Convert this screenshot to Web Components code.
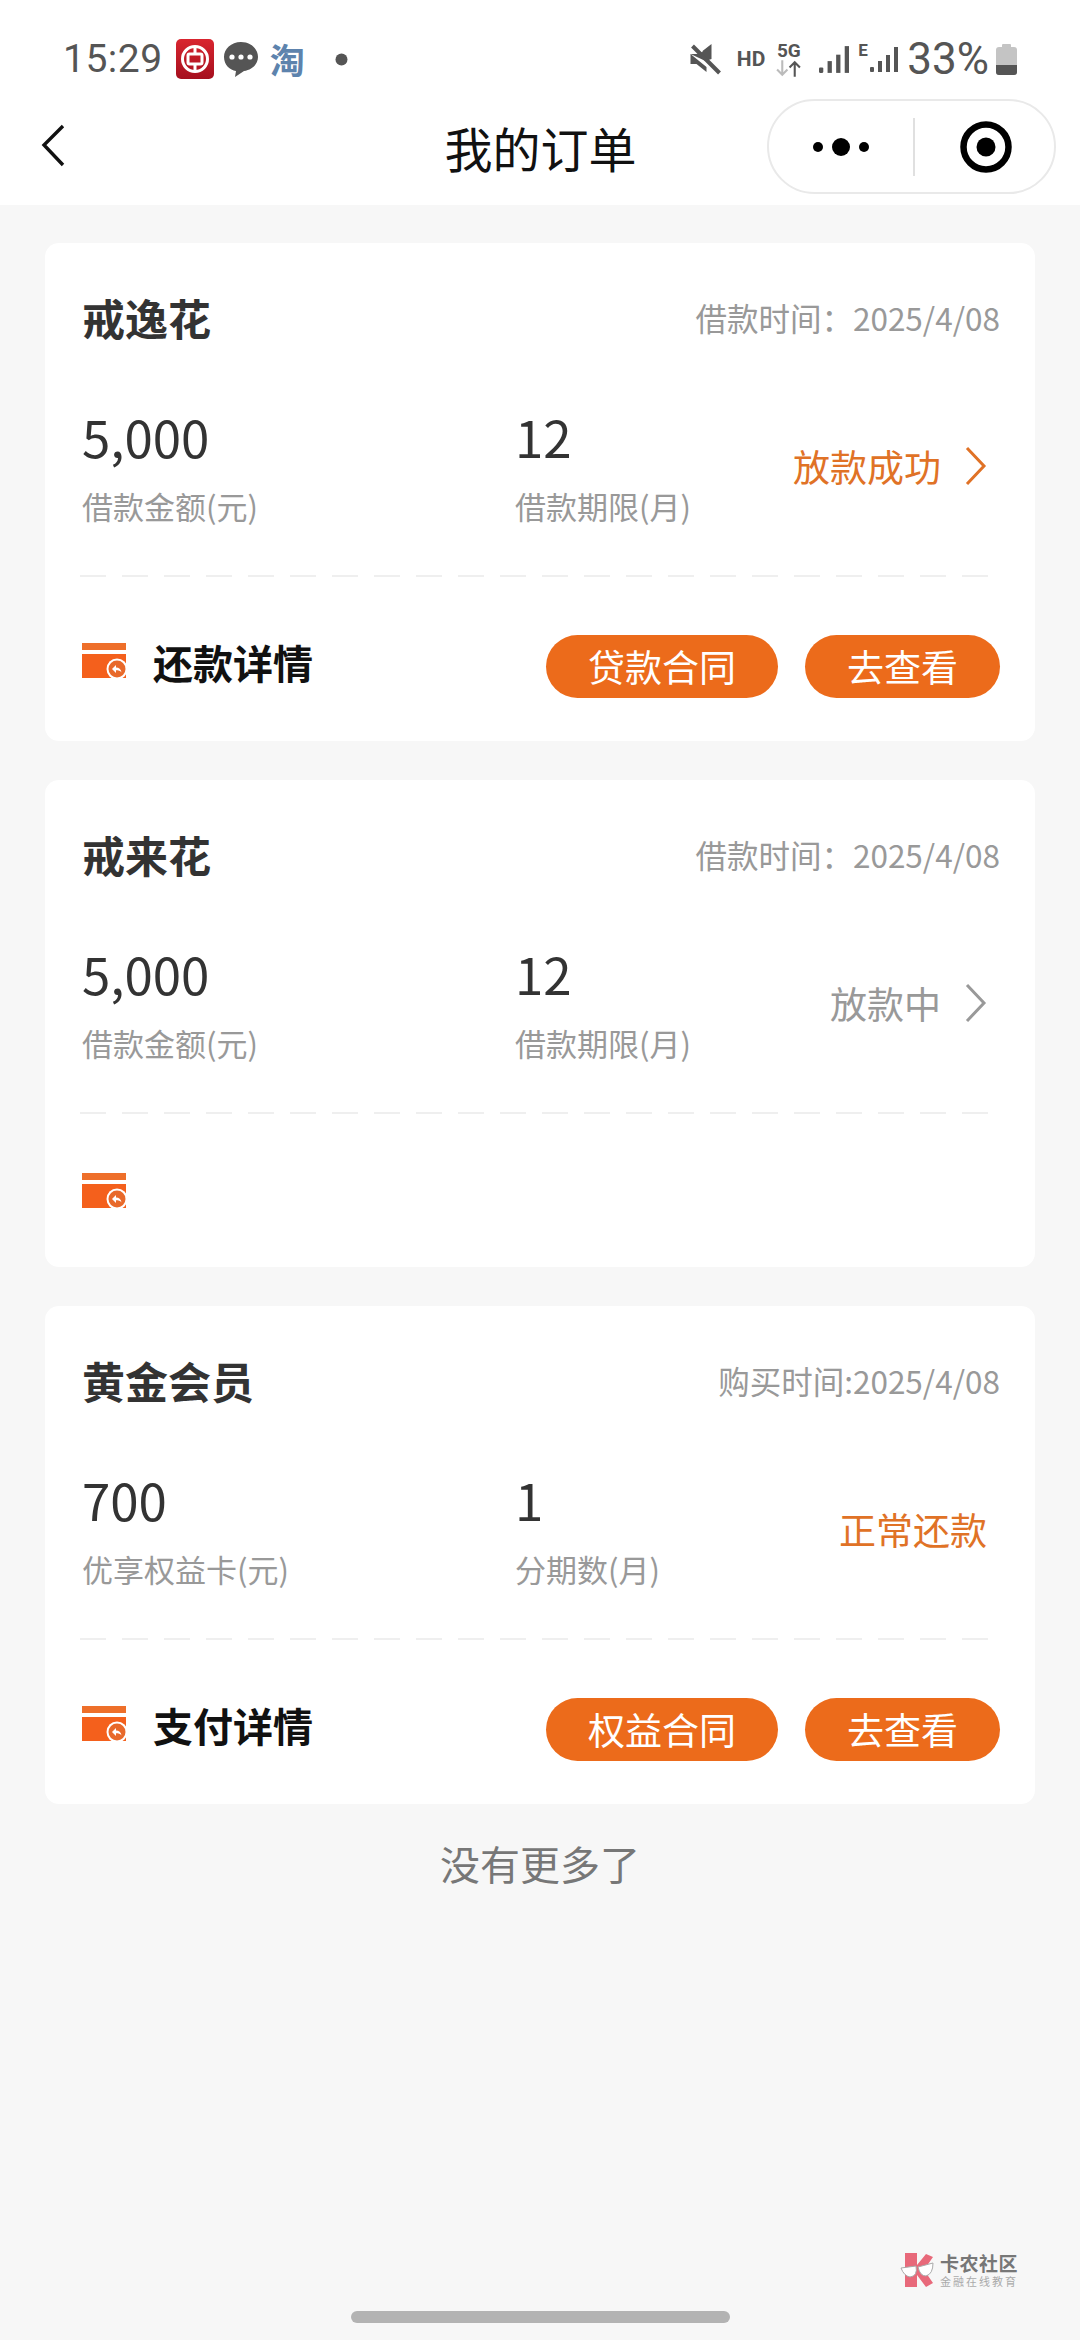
<!DOCTYPE html>
<html lang="zh">
<head>
<meta charset="utf-8">
<title>我的订单</title>
<style>
	html, body { margin: 0; padding: 0; }
	body {
		width: 1080px;
		height: 2340px;
		position: relative;
		overflow: hidden;
		background: #f7f7f7;
		font-family: "Noto Sans CJK SC", "Noto Sans", sans-serif;
	}
</style>
</head>
<body>
<status-bar></status-bar>
<nav-bar title="我的订单"></nav-bar>
<order-list>
	<order-card name="戒逸花" date="借款时间：2025/4/08" amount="5,000" amount-label="借款金额(元)" term="12" term-label="借款期限(月)" status="放款成功" arrow footer="还款详情">
		<pill-button>贷款合同</pill-button>
		<pill-button>去查看</pill-button>
	</order-card>
	<order-card name="戒来花" date="借款时间：2025/4/08" amount="5,000" amount-label="借款金额(元)" term="12" term-label="借款期限(月)" status="放款中" tone="grey" arrow></order-card>
	<order-card name="黄金会员" date="购买时间:2025/4/08" amount="700" amount-label="优享权益卡(元)" term="1" term-label="分期数(月)" status="正常还款" footer="支付详情">
		<pill-button>权益合同</pill-button>
		<pill-button>去查看</pill-button>
	</order-card>
</order-list>
<list-end>没有更多了</list-end>
<water-mark></water-mark>
<home-bar></home-bar>
<script>
class StatusBar extends HTMLElement {
	connectedCallback() {
		if (this.shadowRoot) {
			return;
		}
		const bars = `<rect x="0" y="21" width="4" height="5" rx="1"/><rect x="8" y="15" width="4" height="11"/><rect x="16" y="9" width="4" height="17"/><rect x="24" y="1" width="4" height="25"/>`;
		this.attachShadow({ mode: 'open' });
		this.shadowRoot.innerHTML = `
			<style>
				:host {
					display: flex;
					align-items: center;
					justify-content: space-between;
					box-sizing: border-box;
					height: 85px;
					padding: 33px 63px 0 63px;
					background: #fff;
					color: #555;
					font-family: Roboto, sans-serif;
				}
				.side { display: flex; align-items: center; }
				.time { font-size: 39px; letter-spacing: 0.5px; margin-right: 13px; }
				.pct { font-size: 44px; margin: 0 7px 0 9px; }
				svg { display: block; }
				.hd { font-size: 21px; font-weight: 700; margin: 0 10px 0 15px; }
				.net { display: flex; flex-direction: column; align-items: center; font-size: 19px; font-weight: 700; line-height: 18px; margin-right: 17px; }
			</style>
			<div class="side">
				<span class="time">15:29</span>
				<svg width="38" height="40" viewBox="0 0 38 40">
					<defs><linearGradient id="boc" x1="0" y1="0" x2="0" y2="1"><stop offset="0" stop-color="#d9252f"/><stop offset="1" stop-color="#a50f1e"/></linearGradient></defs>
					<rect width="38" height="40" rx="5" fill="url(#boc)"/>
					<circle cx="19" cy="20" r="12.5" fill="none" stroke="#fff" stroke-width="3"/>
					<path d="M19 7v8M19 25v8" stroke="#fff" stroke-width="3"/>
					<rect x="12" y="15" width="14" height="10" rx="1.5" fill="none" stroke="#fff" stroke-width="3"/>
				</svg>
				<svg width="36" height="36" viewBox="0 0 36 36" style="margin-left:9px">
					<path d="M18 1C8 1 1 8 1 16c0 8 6 13 12 14l-1 6 9-6c8-1 14-7 14-14C35 8 28 1 18 1z" fill="#555"/>
					<circle cx="9" cy="16" r="2.600" fill="#fff"/><circle cx="18" cy="16" r="2.600" fill="#fff"/><circle cx="27" cy="16" r="2.600" fill="#fff"/>
				</svg>
				<span style="margin-left:11px;width:36px;font:700 35px/36px 'Noto Sans CJK SC',sans-serif;color:#5d83ad">淘</span>
				<svg width="13" height="13" viewBox="0 0 13 13" style="margin-left:29px"><circle cx="6.500" cy="6.500" r="6" fill="#555"/></svg>
			</div>
			<div class="side">
				<svg width="33" height="32" viewBox="0 0 32 32">
					<path d="M1 11h6l6-2v-1l9-7v15l-6 2zM1 11v10h6l10 8v-5z" fill="#555"/>
					<path d="M3 3l27 27" stroke="#555" stroke-width="4"/>
				</svg>
				<span class="hd">HD</span>
				<div class="net">
					<span>5G</span>
					<svg width="27" height="17" viewBox="0 0 26 16">
						<path d="M7 0v14M2 9l5 5 5-5" fill="none" stroke="#bbb" stroke-width="2"/>
						<path d="M19 16V2M14 7l5-5 5 5" fill="none" stroke="#555" stroke-width="2"/>
					</svg>
				</div>
				<svg width="30" height="29" viewBox="0 0 28 27" fill="#555">${bars}</svg>
				<span style="font-size:17px;font-weight:700;margin:-18px 0 0 9px;width:12px">E</span>
				<svg width="28" height="29" viewBox="0 0 28 27" fill="#555">${bars}</svg>
				<span class="pct">33%</span>
				<svg width="21" height="31" viewBox="0 0 21 31">
					<rect x="6" y="0" width="9" height="4" rx="1" fill="#c4c4c4"/>
					<rect x="0" y="3" width="21" height="28" rx="3" fill="#c4c4c4"/>
					<path d="M0 21h21v7a3 3 0 0 1-3 3H3a3 3 0 0 1-3-3z" fill="#555"/>
				</svg>
			</div>
		`;
	}
}

class NavBar extends HTMLElement {
	connectedCallback() {
		if (this.shadowRoot) {
			return;
		}
		const title = this.getAttribute('title') || '';
		this.attachShadow({ mode: 'open' });
		this.shadowRoot.innerHTML = `
			<style>
				:host {
					display: grid;
					grid-template-columns: 1fr auto 1fr;
					align-items: center;
					box-sizing: border-box;
					height: 120px;
					padding: 0 24px 0 41px;
					background: #fff;
				}
				.title {
					font-size: 48px;
					color: #111;
					line-height: 1;
					margin: 4px 0 0 -16px;
				}
				.capsule {
					justify-self: end;
					display: flex;
					align-items: center;
					box-sizing: border-box;
					width: 289px;
					height: 95px;
					margin-top: 3px;
					border: 2px solid #e9e9e9;
					border-radius: 48px;
				}
				.more { width: 144px; display: flex; justify-content: center; }
				.line { width: 2px; height: 58px; background: #e0e0e0; }
				.ring { flex: 1; display: flex; justify-content: center; padding-left: 3px; }
				.back { margin-top: 2px; }
				svg { display: block; }
			</style>
			<svg class="back" width="24" height="44" viewBox="0 0 24 44"><path d="M22 2L3 21l19 20" fill="none" stroke="#111" stroke-width="3.400"/></svg>
			<div class="title">${title}</div>
			<div class="capsule">
				<div class="more">
					<svg width="56" height="20" viewBox="0 0 56 20" fill="#000"><circle cx="5" cy="10" r="5"/><circle cx="28" cy="10" r="9"/><circle cx="51" cy="10" r="5"/></svg>
				</div>
				<div class="line"></div>
				<div class="ring">
					<svg width="52" height="52" viewBox="0 0 52 52"><circle cx="26" cy="26" r="22.500" fill="none" stroke="#000" stroke-width="6.500"/><circle cx="26" cy="26" r="9.500" fill="#000"/></svg>
				</div>
			</div>
		`;
	}
}

class OrderList extends HTMLElement {
	connectedCallback() {
		if (this.shadowRoot) {
			return;
		}
		this.attachShadow({ mode: 'open' });
		this.shadowRoot.innerHTML = `
			<style>
				:host {
					display: flex;
					flex-direction: column;
					gap: 39px;
					padding: 38px 45px 0;
				}
			</style>
			<slot></slot>
		`;
	}
}

class OrderCard extends HTMLElement {
	connectedCallback() {
		if (this.shadowRoot) {
			return;
		}
		const name = this.getAttribute('name') || '';
		const date = this.getAttribute('date') || '';
		const amount = this.getAttribute('amount') || '';
		const amountLabel = this.getAttribute('amount-label') || '';
		const term = this.getAttribute('term') || '';
		const termLabel = this.getAttribute('term-label') || '';
		const status = this.getAttribute('status') || '';
		const tone = this.getAttribute('tone') === 'grey' ? '#999' : '#e07226';
		const footer = this.getAttribute('footer') || '';
		const arrow = this.hasAttribute('arrow')
			? `<svg class="arrow" width="22" height="40" viewBox="0 0 22 40"><path d="M2 2l17 18L2 38" fill="none" stroke="${tone}" stroke-width="3"/></svg>`
			: '';

		this.attachShadow({ mode: 'open' });
		this.shadowRoot.innerHTML = `
			<style>
				:host {
					display: block;
					background: #fff;
					border-radius: 14px;
					padding: 0 35px 0 37px;
				}
				.head {
					display: flex;
					justify-content: space-between;
					align-items: center;
					height: 102px;
					padding-top: 23px;
				}
				.name { font-size: 43px; font-weight: 700; color: #333; }
				.date { font-size: 31.5px; color: #999; }
				.info {
					display: grid;
					grid-template-columns: 433px 1fr auto;
					align-items: center;
					margin-top: 33px;
				}
				.num { font-size: 51px; line-height: 70px; color: #333; }
				.label { font-size: 31px; line-height: 44px; margin-top: 13px; color: #999; }
				.status {
					display: flex;
					align-items: center;
					gap: 24px;
					font-size: 37px;
					color: ${tone};
					margin: 2px 13px 0 0;
				}
				.rule {
					height: 2px;
					margin: 47px 9px 0 -2px;
					background: repeating-linear-gradient(90deg, #efefef 0 26px, transparent 26px 42px);
				}
				.foot {
					display: flex;
					align-items: center;
					height: 164px;
				}
				.foot.empty { height: 153px; }
				.icon { display: block; margin-top: 4px; }
				.empty .icon { margin-top: 1px; }
				.foot-title { font-size: 40px; font-weight: 700; color: #111; margin: 6px 0 0 26px; }
				.actions { margin-left: auto; display: flex; gap: 27px; padding-top: 14px; }
			</style>
			<div class="head">
				<span class="name">${name}</span>
				<span class="date">${date}</span>
			</div>
			<div class="info">
				<div>
					<div class="num">${amount}</div>
					<div class="label">${amountLabel}</div>
				</div>
				<div>
					<div class="num">${term}</div>
					<div class="label">${termLabel}</div>
				</div>
				<div class="status"><span>${status}</span>${arrow}</div>
			</div>
			<div class="rule"></div>
			<div class="foot${footer ? '' : ' empty'}">
				<svg class="icon" width="45" height="36" viewBox="0 0 45 36">
					<rect x="0" y="0" width="44" height="7" fill="#ee6f2a"/>
					<rect x="0" y="11" width="44" height="24" fill="#f4601c"/>
					<circle cx="35" cy="26" r="10.500" fill="#fff"/>
					<circle cx="35" cy="26" r="8.500" fill="#e8692a"/>
					<path d="M30 26l4-4v2.400c3 0 5 1.600 5.500 5-1.500-1.800-3-2.200-5.500-2.200V30z" fill="#fff"/>
				</svg>
				${footer ? `<span class="foot-title">${footer}</span>` : ''}
				<div class="actions"><slot></slot></div>
			</div>
		`;
	}
}

class PillButton extends HTMLElement {
	connectedCallback() {
		if (this.shadowRoot) {
			return;
		}
		this.attachShadow({ mode: 'open' });
		this.shadowRoot.innerHTML = `
			<style>
				:host {
					display: flex;
					align-items: center;
					justify-content: center;
					height: 63px;
					padding: 0 42px;
					border-radius: 32px;
					background: #ec6b1b;
					color: #fff;
					font-size: 37px;
				}
			</style>
			<slot></slot>
		`;
	}
}

class ListEnd extends HTMLElement {
	connectedCallback() {
		if (this.shadowRoot) {
			return;
		}
		this.attachShadow({ mode: 'open' });
		this.shadowRoot.innerHTML = `
			<style>
				:host {
					display: block;
					text-align: center;
					margin-top: 31px;
					font-size: 40px;
					line-height: 56px;
					color: #777;
				}
			</style>
			<slot></slot>
		`;
	}
}

class WaterMark extends HTMLElement {
	connectedCallback() {
		if (this.shadowRoot) {
			return;
		}
		this.attachShadow({ mode: 'open' });
		this.shadowRoot.innerHTML = `
			<style>
				:host {
					position: absolute;
					left: 900px;
					top: 2252px;
					display: flex;
					align-items: center;
					gap: 4px;
				}
				.big { font-size: 19px; line-height: 22px; font-weight: 700; color: #777; letter-spacing: 0.5px; white-space: nowrap; }
				.small { font-size: 11px; line-height: 14px; color: #aaa; letter-spacing: 2px; white-space: nowrap; }
			</style>
			<svg width="36" height="36" viewBox="0 0 36 36">
				<path d="M5 1h12v12L26 2l7 3-9 13 9 13-7 4-9-12v12H5z" fill="#e8697a"/>
				<path d="M1 16l15-2q2 10-6 11Q4 24 1 16zM18 15l15-4q0 11-7 13-6 0-8-9z" fill="#fff" stroke="#aaa" stroke-width="1"/>
			</svg>
			<div>
				<div class="big">卡农社区</div>
				<div class="small">金融在线教育</div>
			</div>
		`;
	}
}

class HomeBar extends HTMLElement {
	connectedCallback() {
		if (this.shadowRoot) {
			return;
		}
		this.attachShadow({ mode: 'open' });
		this.shadowRoot.innerHTML = `
			<style>
				:host {
					position: absolute;
					left: 351px;
					top: 2311px;
					width: 379px;
					height: 12px;
					border-radius: 6px;
					background: #b3b3b3;
				}
			</style>
		`;
	}
}

customElements.define('status-bar', StatusBar);
customElements.define('nav-bar', NavBar);
customElements.define('order-list', OrderList);
customElements.define('order-card', OrderCard);
customElements.define('pill-button', PillButton);
customElements.define('list-end', ListEnd);
customElements.define('water-mark', WaterMark);
customElements.define('home-bar', HomeBar);
</script>
</body>
</html>
